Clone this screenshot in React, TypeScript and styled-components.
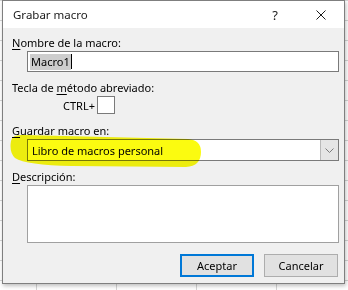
import styled, { createGlobalStyle } from 'styled-components';

const GlobalStyle = createGlobalStyle`
    html, body {
        margin: 0;
        padding: 0;
    }
    body {
        width: 348px;
        height: 290px;
        overflow: hidden;
        font-family: "Noto Sans", "Open Sans", sans-serif;
        background-color: #ffffff;
        background-image:
            linear-gradient(to right, #d4d4d4 1px, transparent 1px),
            linear-gradient(to bottom, #d4d4d4 1px, transparent 1px);
        background-size: 80px 20px;
        background-position: 36px 0;
    }
`

const App = () => {
    return (
        <>
            <GlobalStyle />
            <Dialog>
                <TitleBar>
                    <Title>Grabar macro</Title>
                    <TitleButton>?</TitleButton>
                    <TitleButton>
                        <svg width="10" height="10" viewBox="0 0 10 10">
                            <path d="M0.5 0.5 L9.5 9.5 M9.5 0.5 L0.5 9.5" stroke="#1a1a1a" strokeWidth="1" fill="none" />
                        </svg>
                    </TitleButton>
                </TitleBar>
                <Body>
                    <Label><u>N</u>ombre de la macro:</Label>
                    <TextBox>
                        <Selected>Macro1</Selected>
                        <Caret />
                    </TextBox>

                    <Label>Tecla de <u>m</u>étodo abreviado:</Label>
                    <ShortcutRow>
                        <span>CTRL+</span>
                        <KeyBox />
                    </ShortcutRow>

                    <Label><u>G</u>uardar macro en:</Label>
                    <Select>
                        <SelectValue>Libro de macros personal</SelectValue>
                        <DropButton>
                            <svg width="9" height="5" viewBox="0 0 9 5">
                                <path d="M0.5 0.5 L4.5 4.5 L8.5 0.5" stroke="#7a7a7a" strokeWidth="1" fill="none" />
                            </svg>
                        </DropButton>
                    </Select>

                    <Label><u>D</u>escripción:</Label>
                    <TextArea />

                    <ButtonRow>
                        <Button $primary>Aceptar</Button>
                        <Button>Cancelar</Button>
                    </ButtonRow>
                </Body>
                <Highlight width="343" height="284" viewBox="0 0 343 284">
                    <path
                        d="M9 141 Q10 134 22 135 L186 139 Q199 140 199 152 Q199 166 184 167 L70 166 Q24 165 13 158 Q7 152 9 141 Z"
                        fill="#fbfb10"
                    />
                </Highlight>
            </Dialog>
        </>
    )
}

export default App

const Dialog = styled.div`
    position: relative;
    margin-left: 2px;
    width: 343px;
    height: 284px;
    box-sizing: border-box;
    border: 1px solid #7f7f7f;
    background: #f0f0f0;
    box-shadow: 1px 2px 4px rgba(0, 0, 0, 0.25);
    display: flex;
    flex-direction: column;
    color: #000;
    font-size: 11px;
`

const TitleBar = styled.div`
    height: 27px;
    background: #ffffff;
    display: flex;
    align-items: center;
    padding-left: 10px;
`

const Title = styled.div`
    flex: 1;
    font-size: 11.5px;
    color: #1a1a1a;
`

const TitleButton = styled.div`
    width: 46px;
    height: 27px;
    display: flex;
    align-items: center;
    justify-content: center;
    font-size: 13px;
    color: #1a1a1a;
`

const Body = styled.div`
    flex: 1;
    display: flex;
    flex-direction: column;
    padding: 7px 5px 0 9px;
`

const Label = styled.div`
    line-height: 16px;
    height: 16px;

    u {
        text-decoration-thickness: 1px;
        text-underline-offset: 2px;
    }
`

const Field = styled.div`
    margin-left: 15px;
    box-sizing: border-box;
    border: 1px solid #7a7a7a;
    background: #ffffff;
`

const TextBox = styled(Field)`
    height: 21px;
    margin-bottom: 8px;
    display: flex;
    align-items: center;
    padding-left: 2px;
`

const Selected = styled.span`
    background: #cdcdcd;
    line-height: 16px;
    padding: 0 1px;
`

const Caret = styled.span`
    width: 1px;
    height: 15px;
    background: #000;
`

const ShortcutRow = styled.div`
    display: flex;
    align-items: center;
    gap: 2px;
    height: 18px;
    margin-left: 51px;
    margin-bottom: 9px;
`

const KeyBox = styled.div`
    width: 18px;
    height: 18px;
    box-sizing: border-box;
    border: 1px solid #7a7a7a;
    background: #ffffff;
`

const Select = styled(Field)`
    height: 22px;
    margin-bottom: 8px;
    display: flex;
    align-items: stretch;
`

const SelectValue = styled.div`
    flex: 1;
    display: flex;
    align-items: center;
    padding-left: 4px;
`

const DropButton = styled.div`
    width: 17px;
    background: #e5e5e5;
    border-left: 1px solid #b9b9b9;
    display: flex;
    align-items: center;
    justify-content: center;
`

const TextArea = styled(Field)`
    height: 58px;
    margin-bottom: 11px;
    border-color: #a0a0a0;
`

const ButtonRow = styled.div`
    display: flex;
    justify-content: flex-end;
    gap: 10px;
    padding-right: 1px;
`

const Button = styled.div<{ $primary?: boolean }>`
    width: 74px;
    height: 23px;
    box-sizing: border-box;
    display: flex;
    align-items: center;
    justify-content: center;
    background: #e1e1e1;
    border: ${p => p.$primary ? '2px solid #0078d7' : '1px solid #adadad'};
`

const Highlight = styled.svg`
    position: absolute;
    left: -1px;
    top: -1px;
    pointer-events: none;
    mix-blend-mode: multiply;
`
